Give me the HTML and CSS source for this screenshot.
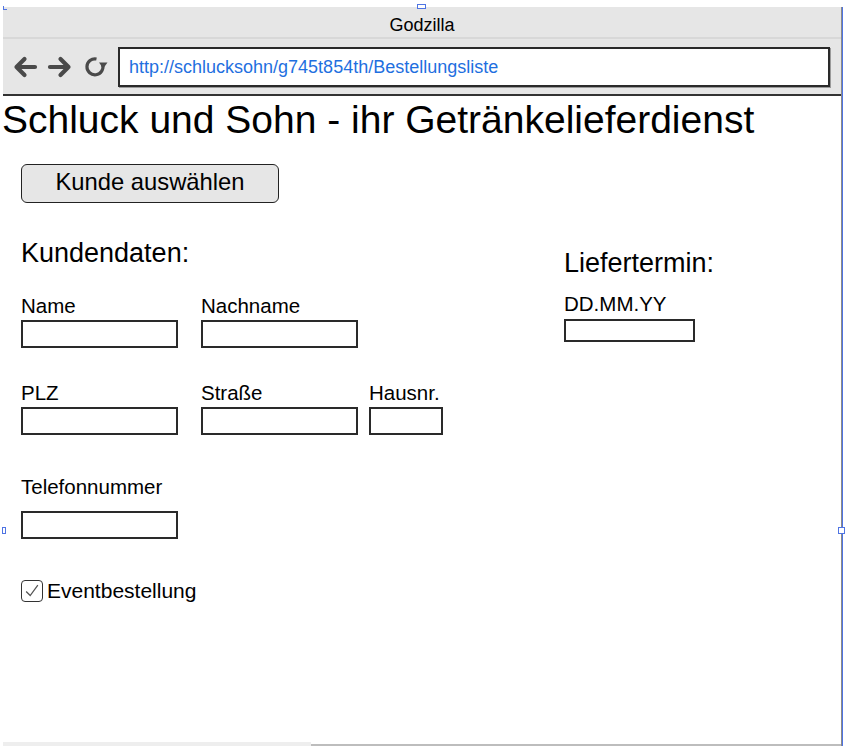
FILE: index.html
```html
<!DOCTYPE html>
<html lang="de">
<head>
<meta charset="utf-8">
<title>Godzilla</title>
<link rel="stylesheet" href="styles.css">
</head>
<body>
<div class="frame">
  <div class="titlebar">Godzilla</div>
  <div class="sep"></div>
  <div class="toolbar">
    <svg class="nav back" viewBox="0 0 26 24" width="26" height="24"><path d="M23 12H4.5M12.5 4L4.5 12L12.5 20" fill="none" stroke="#4a4a4a" stroke-width="4.2" stroke-linecap="round" stroke-linejoin="round"/></svg>
    <svg class="nav fwd" viewBox="0 0 26 24" width="26" height="24"><path d="M3 12H21.5M13.5 4L21.5 12L13.5 20" fill="none" stroke="#4a4a4a" stroke-width="4.2" stroke-linecap="round" stroke-linejoin="round"/></svg>
    <svg class="nav reload" viewBox="0 0 24 24" width="24" height="24"><path d="M18.6 9.5A8 8 0 1 1 12.5 4" fill="none" stroke="#4a4a4a" stroke-width="3.2"/><path d="M15 7.5L23.5 7.5L19.2 13.5Z" fill="#4a4a4a"/></svg>
    <div class="url">http://schlucksohn/g745t854th/Bestellungsliste</div>
  </div>
  <div class="page">
    <h1 class="headline">Schluck und Sohn - ihr Getränkelieferdienst</h1>
    <button class="pick">Kunde auswählen</button>
    <div class="cols">
      <div class="left">
        <h2 class="section">Kundendaten:</h2>
        <div class="row row1">
          <div class="field"><label class="lbl">Name</label><input class="box w157" type="text"></div>
          <div class="field"><label class="lbl">Nachname</label><input class="box w157" type="text"></div>
        </div>
        <div class="row row2">
          <div class="field"><label class="lbl">PLZ</label><input class="box w157" type="text"></div>
          <div class="field"><label class="lbl">Straße</label><input class="box w157" type="text"></div>
          <div class="field"><label class="lbl">Hausnr.</label><input class="box w74" type="text"></div>
        </div>
        <div class="tel">
          <label class="lbl">Telefonnummer</label>
          <input class="box w157" type="text">
        </div>
        <div class="check">
          <span class="cb"><svg viewBox="0 0 20 20" width="18" height="18"><path d="M3.5 10.5L8 15L16.5 3.5" fill="none" stroke="#555" stroke-width="1.4"/></svg></span>
          <span class="cbl">Eventbestellung</span>
        </div>
      </div>
      <div class="right">
        <h2 class="section">Liefertermin:</h2>
        <label class="lbl date-lbl">DD.MM.YY</label>
        <input class="box date" type="text">
      </div>
    </div>
  </div>
  <div class="scroll"><div class="track"></div><div class="thumb"></div></div>
</div>
<div class="handle h-top"></div>
<div class="handle h-left"></div>
<div class="handle h-right"></div>
<div class="corner"></div>
</body>
</html>
```
FILE: styles.css
```css
html, body {
  margin: 0;
  padding: 0;
  background: #fff;
}
body {
  position: relative;
  width: 846px;
  height: 746px;
  overflow: hidden;
  font-family: "Liberation Sans", Arial, sans-serif;
  color: #000;
}
.frame {
  margin: 7px 0 0 3px;
  width: 838px;
  height: 739px;
  border-right: 1px solid #8a8a8a;
  box-shadow: 1px 0 0 #4f74e3;
  display: flex;
  flex-direction: column;
  background: #fff;
}
.titlebar {
  box-sizing: border-box;
  height: 30px;
  padding-top: 3px;
  line-height: 30px;
  background: #e6e6e6;
  text-align: center;
  font-size: 18px;
}
.sep {
  height: 2px;
  background: #d8d8d8;
}
.toolbar {
  height: 55px;
  background: #e6e6e6;
  border-bottom: 2px solid #333;
  display: flex;
  align-items: center;
  padding-left: 9px;
}
.nav { display: block; flex: none; }
.back { margin-right: 9px; }
.fwd { margin-right: 11px; }
.reload { margin-right: 10px; }
.url {
  box-sizing: border-box;
  flex: 1;
  margin-right: 11px;
  height: 40px;
  border: 2px solid #2a2a2a;
  background: #fff;
  color: #1f6fe0;
  font-size: 18px;
  line-height: 37px;
  padding-left: 9px;
  box-shadow: 1px 1px 0 #9a9a9a;
}
.page {
  flex: 1;
  padding-left: 18px;
}
.headline {
  margin: 1px 0 0 -19px;
  font-size: 39px;
  line-height: 45px;
  font-weight: normal;
}
.pick {
  display: block;
  margin-top: 22px;
  width: 258px;
  height: 39px;
  box-sizing: border-box;
  background: #e6e6e6;
  border: 1.5px solid #222;
  border-radius: 6px;
  font-family: "Liberation Sans", Arial, sans-serif;
  font-size: 23.8px;
  color: #000;
  padding: 0 0 3px 0;
}
.cols {
  display: flex;
}
.left {
  width: 543px;
}
.section {
  font-size: 27px;
  line-height: 31px;
  font-weight: normal;
  margin: 0;
}
.left .section { margin-top: 35px; }
.right .section { margin-top: 45px; }
.lbl {
  display: block;
  font-size: 20.5px;
  line-height: 24px;
}
.box {
  display: block;
  box-sizing: border-box;
  height: 28px;
  margin: 2px 0 0 0;
  padding: 0;
  border: 2px solid #2a2a2a;
  background: #fff;
  outline: none;
}
.w157 { width: 157px; }
.w74 { width: 74px; }
.row {
  display: grid;
  grid-template-columns: 180px 168px 74px;
}
.row1 { margin-top: 25px; }
.row2 { margin-top: 33px; }
.tel { margin-top: 40px; }
.tel .box { margin-top: 12px; }
.check {
  margin-top: 40px;
  display: flex;
  align-items: center;
}
.cb {
  box-sizing: border-box;
  width: 22px;
  height: 22px;
  border: 1.5px solid #333;
  border-radius: 4px;
  display: flex;
  align-items: center;
  justify-content: center;
  margin-right: 4px;
}
.cb svg { display: block; }
.cbl {
  font-size: 21px;
  line-height: 24px;
}
.date-lbl { margin-top: 13px; }
.box.date {
  width: 131px;
  height: 23px;
  margin-top: 3px;
}
.scroll {
  height: 4px;
  display: flex;
  align-items: flex-end;
}
.track {
  width: 308px;
  height: 4px;
  background: #eeeeee;
}
.thumb {
  flex: 1;
  height: 2px;
  background: #bdbdbd;
}
.handle {
  position: absolute;
  box-sizing: border-box;
  border: 1px solid #4f74e3;
  background: #fff;
}
.h-top { left: 417px; top: 4px; width: 9px; height: 5px; }
.h-left { left: 2px; top: 527px; width: 4px; height: 7px; }
.h-right { left: 838px; top: 527px; width: 7px; height: 7px; }
.corner {
  position: absolute;
  left: 3px;
  top: 6px;
  width: 3px;
  height: 3px;
  border-left: 1px solid #4f74e3;
  border-bottom: 1px solid #4f74e3;
}
```
